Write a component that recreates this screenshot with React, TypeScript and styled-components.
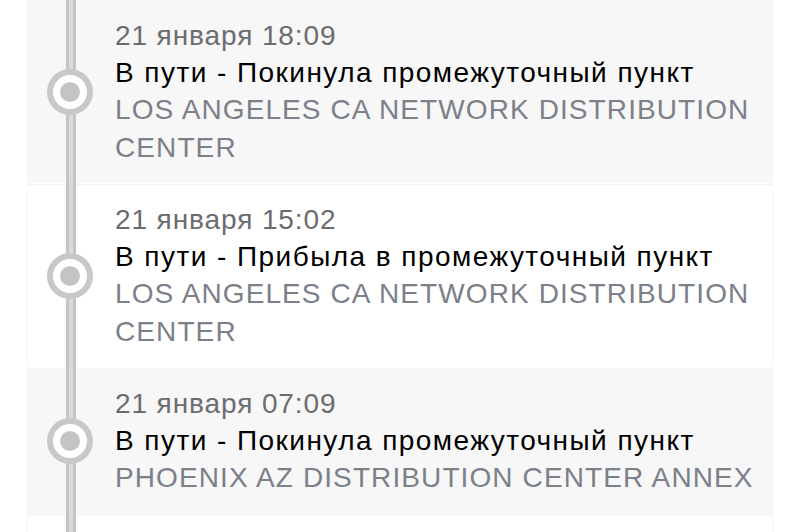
import React from 'react';
import styled, { createGlobalStyle } from 'styled-components';

const GlobalStyle = createGlobalStyle`
    html, body {
        margin: 0;
        padding: 0;
        background: #ffffff;
        font-family: "Liberation Sans", Arial, sans-serif;
        -webkit-font-smoothing: antialiased;
    }
`

const Page = styled.div`
    width: 800px;
    height: 532px;
    overflow: hidden;
    background: #ffffff;
    padding: 0 27px;
    box-sizing: border-box;
`

const List = styled.div`
    position: relative;
    display: flex;
    flex-direction: column;
    gap: 1px;
`

const Rail = styled.div`
    position: absolute;
    top: 0;
    bottom: 0;
    left: 39px;
    width: 4px;
    background: #dadada;
    border-left: 3px solid #c4c4c4;
    border-right: 3px solid #c4c4c4;
    z-index: 1;
`

const Card = styled.div<{ $shade: boolean }>`
    display: flex;
    align-items: center;
    background: ${({ $shade }) => ($shade ? '#f7f7f7' : '#ffffff')};
    box-shadow: ${({ $shade }) => ($shade ? 'none' : 'inset 1px 0 0 #f2f2f2, inset 0 1px 0 #f2f2f2, inset -1px 0 0 #f2f2f2')};
`

const Marker = styled.div`
    width: 88px;
    flex: none;
    display: flex;
    justify-content: center;
`

const Ring = styled.div`
    position: relative;
    z-index: 2;
    width: 46px;
    height: 46px;
    margin-left: -2px;
    box-sizing: border-box;
    border-radius: 50%;
    border: 6px solid #c8c8c8;
    background: #ffffff;
    display: flex;
    align-items: center;
    justify-content: center;
`

const Dot = styled.div`
    width: 20px;
    height: 20px;
    border-radius: 50%;
    background: #c4c4c4;
`

const Body = styled.div`
    flex: 1;
    padding: 17px 0 16px 0;
    font-size: 28px;
    line-height: 37px;
`

const Date = styled.div`
    color: #6c6c70;
    letter-spacing: 0.9px;
`

const Title = styled.div`
    color: #000000;
    letter-spacing: 1.45px;
    white-space: nowrap;
`

const Place = styled.div`
    color: #7b8089;
    letter-spacing: 1.1px;
    line-height: 38px;
`

type Event = {
    date: string;
    title: string;
    place: string;
};

const events: Event[] = [
    {
        date: '21 января 18:09',
        title: 'В пути - Покинула промежуточный пункт',
        place: 'LOS ANGELES CA NETWORK DISTRIBUTION CENTER',
    },
    {
        date: '21 января 15:02',
        title: 'В пути - Прибыла в промежуточный пункт',
        place: 'LOS ANGELES CA NETWORK DISTRIBUTION CENTER',
    },
    {
        date: '21 января 07:09',
        title: 'В пути - Покинула промежуточный пункт',
        place: 'PHOENIX AZ DISTRIBUTION CENTER ANNEX',
    },
    {
        date: '',
        title: '',
        place: '',
    },
];

const App = () => {
    return (
        <>
            <GlobalStyle />
            <Page>
                <List>
                    <Rail />
                    {events.map((ev, i) => (
                        <Card key={i} $shade={i % 2 === 0}>
                            <Marker>
                                {ev.title && (
                                    <Ring>
                                        <Dot />
                                    </Ring>
                                )}
                            </Marker>
                            <Body>
                                <Date>{ev.date}</Date>
                                <Title>{ev.title}</Title>
                                <Place>{ev.place}</Place>
                            </Body>
                        </Card>
                    ))}
                </List>
            </Page>
        </>
    );
};

export default App;
